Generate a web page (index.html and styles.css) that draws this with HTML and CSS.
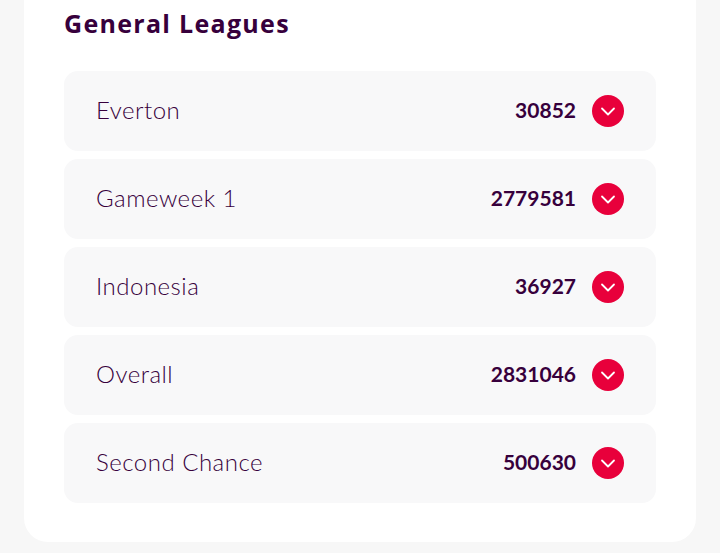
FILE: index.html
```html
<!DOCTYPE html>
<html lang="en">
<head>
    <meta charset="UTF-8">
    <meta name="viewport" content="width=device-width, initial-scale=1.0">
    <title>General Leagues</title>
    <link rel="stylesheet" href="styles.css">
</head>
<body>
<div class="page">
    <section class="card">
        <h2 class="title">General Leagues</h2>
        <ul class="leagues">
            <li class="league">
                <span class="name">Everton</span>
                <span class="rank">30852</span>
                <a class="toggle"><svg viewBox="0 0 32 32"><path d="M10 13.5 16 19.5l6-6"/></svg></a>
            </li>
            <li class="league">
                <span class="name">Gameweek 1</span>
                <span class="rank">2779581</span>
                <a class="toggle"><svg viewBox="0 0 32 32"><path d="M10 13.5 16 19.5l6-6"/></svg></a>
            </li>
            <li class="league">
                <span class="name">Indonesia</span>
                <span class="rank">36927</span>
                <a class="toggle"><svg viewBox="0 0 32 32"><path d="M10 13.5 16 19.5l6-6"/></svg></a>
            </li>
            <li class="league">
                <span class="name">Overall</span>
                <span class="rank">2831046</span>
                <a class="toggle"><svg viewBox="0 0 32 32"><path d="M10 13.5 16 19.5l6-6"/></svg></a>
            </li>
            <li class="league">
                <span class="name">Second Chance</span>
                <span class="rank">500630</span>
                <a class="toggle"><svg viewBox="0 0 32 32"><path d="M10 13.5 16 19.5l6-6"/></svg></a>
            </li>
        </ul>
    </section>
</div>
</body>
</html>
```

FILE: styles.css
```css
html {
    background: #f7f7f7;
}
body {
    margin: 0;
    font-family: Lato, "Open Sans", sans-serif;
    color: #37003c;
}
ul {
    margin: 0;
    padding: 0;
    list-style: none;
}
.page {
    padding: 0 24px;
}
.card {
    background: #fff;
    border-radius: 0 0 24px 24px;
    padding: 8px 40px 39px;
}
.title {
    margin: 0 0 33px;
    font-family: "Open Sans", Lato, sans-serif;
    font-size: 25px;
    line-height: 30px;
    font-weight: 700;
    letter-spacing: 1.3px;
}
.leagues {
    display: flex;
    flex-direction: column;
    gap: 8px;
}
.league {
    display: flex;
    align-items: center;
    height: 80px;
    padding: 0 32px;
    background: #f8f8f9;
    border-radius: 14px;
}
.name {
    flex: 1;
    font-size: 24px;
    font-weight: 300;
    letter-spacing: .5px;
    padding-bottom: 3px;
}
.rank {
    font-size: 21px;
    font-weight: 700;
    padding-bottom: 3px;
}
.toggle {
    display: block;
    width: 32px;
    height: 32px;
    margin-left: 16px;
    border-radius: 50%;
    background: #e8003b;
}
.toggle svg {
    display: block;
    width: 32px;
    height: 32px;
    fill: none;
    stroke: #fff;
    stroke-width: 1.8;
    stroke-linecap: round;
    stroke-linejoin: round;
}
```
